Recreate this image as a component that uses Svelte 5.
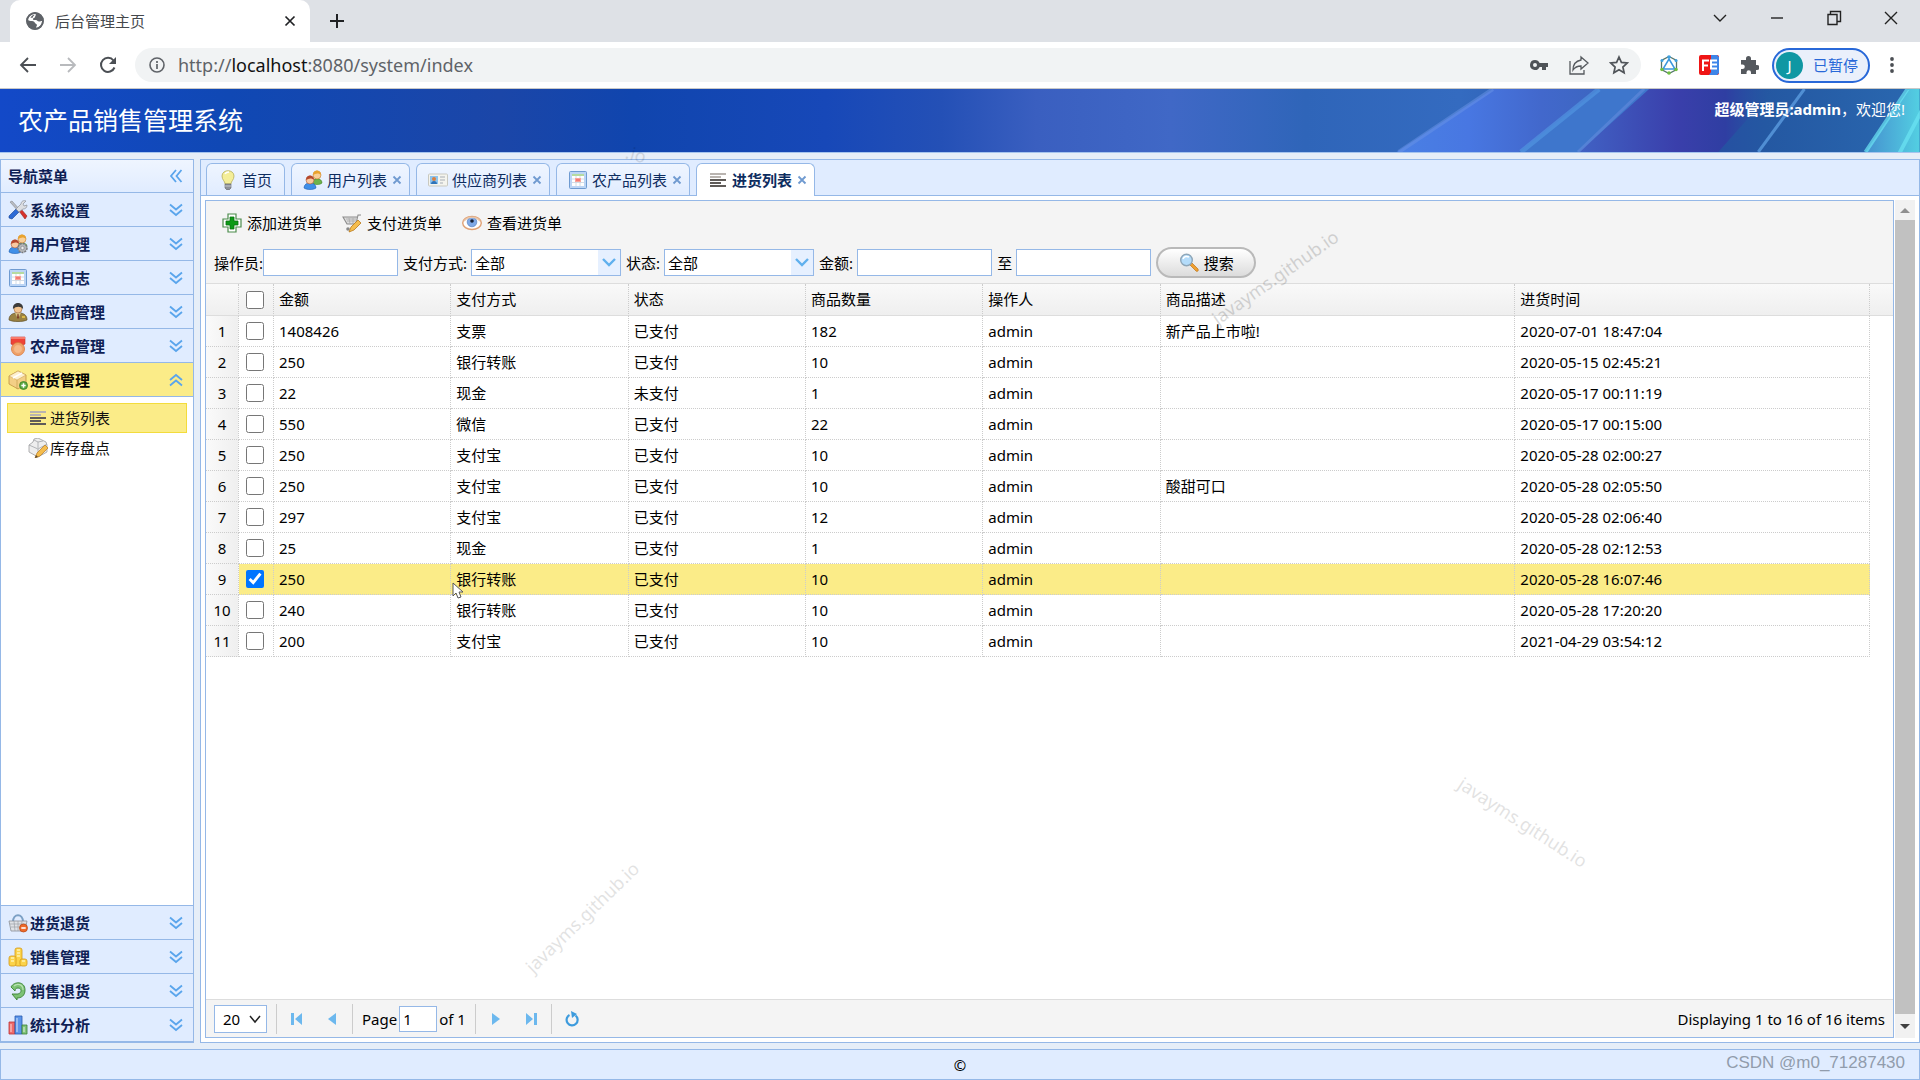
<script lang="ts">
	interface Menu {
		icon: string;
		title: string;
	}

	const top_menus: Array<Menu> = [
		{icon: 'tools', title: '系统设置'},
		{icon: 'users_gear', title: '用户管理'},
		{icon: 'calendar', title: '系统日志'},
		{icon: 'person', title: '供应商管理'},
		{icon: 'medal', title: '农产品管理'},
		{icon: 'box_add', title: '进货管理'},
	];

	const bottom_menus: Array<Menu> = [
		{icon: 'basket', title: '进货退货'},
		{icon: 'coins', title: '销售管理'},
		{icon: 'undo', title: '销售退货'},
		{icon: 'chart', title: '统计分析'},
	];

	const sub_menus: Array<Menu> = [
		{icon: 'lines', title: '进货列表'},
		{icon: 'box_edit', title: '库存盘点'},
	];

	const tabs: Array<Menu> = [
		{icon: 'bulb', title: '首页'},
		{icon: 'users', title: '用户列表'},
		{icon: 'card', title: '供应商列表'},
		{icon: 'calendar', title: '农产品列表'},
		{icon: 'lines', title: '进货列表'},
	];

	const actions: Array<Menu> = [
		{icon: 'add', title: '添加进货单'},
		{icon: 'cart', title: '支付进货单'},
		{icon: 'eye', title: '查看进货单'},
	];

	const columns = ['金额', '支付方式', '状态', '商品数量', '操作人', '商品描述', '进货时间'];

	const rows = [
		['1408426', '支票', '已支付', '182', 'admin', '新产品上市啦!', '2020-07-01 18:47:04'],
		['250', '银行转账', '已支付', '10', 'admin', '', '2020-05-15 02:45:21'],
		['22', '现金', '未支付', '1', 'admin', '', '2020-05-17 00:11:19'],
		['550', '微信', '已支付', '22', 'admin', '', '2020-05-17 00:15:00'],
		['250', '支付宝', '已支付', '10', 'admin', '', '2020-05-28 02:00:27'],
		['250', '支付宝', '已支付', '10', 'admin', '酸甜可口', '2020-05-28 02:05:50'],
		['297', '支付宝', '已支付', '12', 'admin', '', '2020-05-28 02:06:40'],
		['25', '现金', '已支付', '1', 'admin', '', '2020-05-28 02:12:53'],
		['250', '银行转账', '已支付', '10', 'admin', '', '2020-05-28 16:07:46'],
		['240', '银行转账', '已支付', '10', 'admin', '', '2020-05-28 17:20:20'],
		['200', '支付宝', '已支付', '10', 'admin', '', '2021-04-29 03:54:12'],
	];

	let open_menu = $state(5);
	let active_tab = $state(4);
	let checked = $state(rows.map((_, i) => i === 8));
</script>

{#snippet icon(name: string)}
	<svg class="icon" viewBox="0 0 20 20" aria-hidden="true">
		{#if name === 'tools'}
			<path d="M2 2l2-1 9 10-2 1z" fill="#b9bcc2" stroke="#85888f" stroke-width=".6" />
			<path d="M11 11l2-2 6 7-2 3z" fill="#d8322c" stroke="#962020" stroke-width=".6" />
			<path d="M8 9l3 3-7 7-3-1 0-2z" fill="#2d6bd6" stroke="#1a4391" stroke-width=".6" />
			<path d="M8 9l5-5c0-3 3-4 5-3l-3 3 1 2 3-1c0 3-2 4-4 4l-4 3z" fill="#dcdee2" stroke="#8d9098" stroke-width=".7" />
		{:else if name === 'users' || name === 'users_gear'}
			<path d="M9 13c0-5 10-6 10 0-2 2-8 2-10 0z" fill="#6db34c" stroke="#45852c" stroke-width=".6" />
			<circle cx="14" cy="5" r="4" fill="#f9cf98" stroke="#c47a27" stroke-width=".6" />
			<path d="M10 5c0-6 8-6 8 0-2-2-5-2-8 0z" fill="#e9a32e" />
			<path d="M1 18c0-7 12-7 12 0-3 2-9 2-12 0z" fill="#3f8fe8" stroke="#1f5eb0" stroke-width=".6" />
			<circle cx="7" cy="10" r="4" fill="#f9c9a0" stroke="#a5573a" stroke-width=".6" />
			<path d="M3 10c0-6 8-6 8 0-2-2-5-2-8 0z" fill="#b5482d" />
			{#if name === 'users_gear'}
				<circle cx="14.500" cy="14" r="4.500" fill="#b4b6b9" stroke="#77797d" stroke-width="1.500" stroke-dasharray="2 1" />
				<circle cx="14.500" cy="14" r="1.700" fill="#eee" stroke="#77797d" stroke-width=".6" />
			{/if}
		{:else if name === 'calendar'}
			<rect x="1.500" y="1.500" width="17" height="17" rx="1" fill="#bcd5f5" stroke="#6f9bd1" />
			<path d="M4 4h12v12H4z" fill="#fff" />
			<path d="M4 4h12v2H4z" fill="#b5dba0" />
			<path d="M4 9h12M4 12.500h12M8 6v10M12 6v10" stroke="#c9d3de" stroke-width=".8" />
			<path d="M7 8h6v4H7z" fill="#f9a49c" />
			<path d="M8 9h4v2H8z" fill="#f37c74" />
		{:else if name === 'person'}
			<path d="M1 18c0-4 2-6 6-7h6c4 1 6 3 6 7-4 2-14 2-18 0z" fill="#9a8243" stroke="#5f4d22" stroke-width=".7" />
			<path d="M7 11l3 6 3-6z" fill="#d8c287" />
			<path d="M9.500 12h1l.5 4-1 1-1-1z" fill="#7a3a22" />
			<circle cx="10" cy="7" r="4" fill="#f3c490" stroke="#a1693a" stroke-width=".6" />
			<path d="M5 7c-1-8 11-8 10 0-2-3-7-3-10 0z" fill="#3c3c3c" />
			<path d="M14 15h3" stroke="#f0cb45" stroke-width="1.500" />
		{:else if name === 'medal'}
			<path d="M3 1h14v7l-4 2H7L3 8z" fill="#ee4338" stroke="#c4332a" stroke-width=".6" />
			<path d="M3 1h14v2H3z" fill="#f87a6c" />
			<circle cx="10" cy="13" r="6.500" fill="#f0a268" stroke="#d9773b" stroke-width=".8" />
			<circle cx="10" cy="13" r="4.300" fill="#f6b988" stroke="#eaa06c" stroke-width=".6" />
		{:else if name === 'box_add'}
			<path d="M1 6l9-5 8 4v9l-8 5-9-5z" fill="#f3cf86" stroke="#b98a35" stroke-width=".7" />
			<path d="M1 6l8 4 9-5-8-4z" fill="#fdf0cf" stroke="#c79d4d" stroke-width=".5" />
			<path d="M9 10v9" stroke="#c79d4d" stroke-width=".7" />
			<path d="M5 8l9-5" stroke="#fff" stroke-width="1.500" />
			<circle cx="15.500" cy="15.500" r="4" fill="#5faa44" stroke="#2e7a1c" stroke-width=".7" />
			<path d="M13.300 15.500h4.400M15.500 13.300v4.400" stroke="#fff" stroke-width="1.500" />
		{:else if name === 'box_edit'}
			<path d="M1 7l4-3 1-3 4-1 4 2 4 2 1 3v7l-9 5-9-5z" fill="#eee" stroke="#8f9194" stroke-width=".7" />
			<path d="M1 7l9 4 9-5M10 11v8M6 2l4 2 5-1M10 4v6" fill="none" stroke="#a2a4a8" stroke-width=".8" />
			<path d="M17 7l3 3-8 8-5 2 2-5z" fill="#f5bd4d" stroke="#b97a1d" stroke-width=".7" />
			<path d="M7 20l1-3 2 2z" fill="#5a4a30" />
		{:else if name === 'lines'}
			<path d="M2 4h16M2 7h11" stroke="#b9b4b0" stroke-width="2" />
			<path d="M2 10h16M2 13h11M2 16h16" stroke="#5f5b58" stroke-width="2" />
		{:else if name === 'basket'}
			<path d="M5 9c0-9 10-9 10 0" fill="none" stroke="#7ba0c5" stroke-width="2" />
			<path d="M1 8h18l-2 10H3z" fill="#dfe2e6" stroke="#8c9197" stroke-width=".8" />
			<path d="M2 11h16M3 14h14M6 8l1 10M10 8v10M14 8l-1 10" stroke="#9da2a8" stroke-width=".7" />
			<circle cx="15.500" cy="15" r="4" fill="#ee6b2b" stroke="#b84612" stroke-width=".7" />
			<path d="M13.300 15h4.400" stroke="#fff" stroke-width="1.600" />
		{:else if name === 'coins'}
			<g fill="#fbd34a" stroke="#d49b18" stroke-width=".8">
				<rect x="7" y="1" width="7" height="18" rx="2" />
				<rect x="1" y="9" width="7" height="10" rx="2" />
				<rect x="12" y="12" width="7" height="7" rx="2" />
			</g>
			<path d="M9 3h3M9 6h3M9 9h3M3 11h3M3 14h3M14 14h3" stroke="#fff3b0" stroke-width="1.400" />
		{:else if name === 'undo'}
			<path d="M4 13h6c4-1 4-6 0-6-2 0-3 1-3 3l-4-4c3-6 14-6 14 3 0 6-4 8-8 8v2z" fill="#7cc274" stroke="#3b8236" stroke-width=".9" />
			<path d="M6 5c3-3 9-2 9 4" fill="none" stroke="#b8e2b2" stroke-width="1.200" />
		{:else if name === 'chart'}
			<path d="M1 7h6v12H1z" fill="#ee6a6a" stroke="#bc3434" stroke-width=".8" />
			<path d="M7 1h7v18H7z" fill="#5b95ea" stroke="#2758ad" stroke-width=".8" />
			<path d="M14 10h5v9h-5z" fill="#80c47b" stroke="#3b8236" stroke-width=".8" />
			<path d="M3 9v8M9 3v14M16 12v5" stroke="#fff" stroke-opacity=".5" stroke-width="1.500" />
		{:else if name === 'bulb'}
			<path d="M7 14c0-3-3-4-3-8 0-7 12-7 12 0 0 4-3 5-3 8z" fill="#f4ee98" stroke="#b5ae5c" stroke-width=".8" />
			<path d="M7 4c1-2 3-2 4-2" fill="none" stroke="#fff" stroke-width="1.500" />
			<path d="M7 14h6v4l-2 2H9l-2-2z" fill="#8d9198" stroke="#5f6268" stroke-width=".6" />
			<path d="M7 16h6" stroke="#d2d4d8" stroke-width=".8" />
		{:else if name === 'card'}
			<rect x=".5" y="4" width="19" height="12" rx="1" fill="#f4f4ee" stroke="#c9c9c0" />
			<path d="M2 6h8v8H2z" fill="#8dc4ee" />
			<circle cx="6" cy="9" r="2" fill="#d88040" />
			<path d="M3 14c0-4 6-4 6 0z" fill="#2f73b8" />
			<path d="M12 7h5M12 10h5M12 13h3" stroke="#a7adb5" stroke-width="1.200" />
		{:else if name === 'add'}
			<path d="M6 1h8v5h5v8h-5v5H6v-5H1V6h5z" fill="#fff" stroke="#4b8b4b" stroke-width="1.200" />
			<path d="M8 4h4v4h4v4h-4v4H8v-4H4V8h4z" fill="#0c9a16" stroke="#08720f" stroke-width=".8" />
		{:else if name === 'cart'}
			<path d="M19 2h-3l-2 9H5L1 4h14" fill="#ddd" stroke="#8c8c8c" stroke-width="1.100" />
			<path d="M4 6h10M5 8h9M7 5l1 6M11 5v6" stroke="#aaa" stroke-width=".8" />
			<circle cx="6" cy="16" r="1.800" fill="#888" />
			<path d="M16 7l3 3-7 7-5 2 2-5z" fill="#f5bd4d" stroke="#b97a1d" stroke-width=".8" />
		{:else if name === 'eye'}
			<ellipse cx="10" cy="10" rx="9.300" ry="6.500" fill="#fff" stroke="#dfa073" stroke-width="1.400" />
			<circle cx="10" cy="9" r="4.800" fill="#7fa9e6" stroke="#5781c0" stroke-width=".7" />
			<circle cx="10" cy="8" r="1.800" fill="#172238" />
			<path d="M2 8c4-5 12-5 16 0" fill="none" stroke="#e9c6aa" stroke-width="1.500" />
		{:else if name === 'search'}
			<path d="M11 12l2-2 6 6c1 2-1 3-2 2z" fill="#f0a030" stroke="#b97318" stroke-width=".7" />
			<circle cx="7.500" cy="7" r="5.800" fill="#b4dcfa" stroke="#8ea6b8" stroke-width="1.400" />
			<path d="M4 6c1-3 4-3 6-2" fill="none" stroke="#fff" stroke-width="1.500" />
		{/if}
	</svg>
{/snippet}

{#snippet menu_head(menu: Menu, selected: boolean, onclick: () => void)}
	<button class="menu_head" class:selected type="button" {onclick}>
		{@render icon(menu.icon)}
		<span>{menu.title}</span>
		<svg class="chevrons" class:up={selected} viewBox="0 0 14 14" aria-hidden="true">
			<path d="M1 1.500l6 5 6-5M1 7l6 5 6-5" />
		</svg>
	</button>
{/snippet}

<div class="page">
	<header class="chrome">
		<div class="tab_strip">
			<div class="chrome_tab">
				<svg class="s18" viewBox="0 0 18 18" aria-hidden="true">
					<circle cx="9" cy="9" r="8.700" fill="#5f6368" />
					<path d="M9.500 1.800c1 1.500-.5 2-.5 3.200s-2 .5-2 2 2 1 3 1 1.500 1.500 3 1.500 2-.5 3.200-.5c-.3 3.500-2.700 6-5.700 6.900-1-.9.500-1.900.5-2.900s-1.500-1-2-2-1-2-3-2-3.500-.5-4.200-1c.2-3.200 3.700-6.400 7.700-6.200z" fill="#fff" />
					<path d="M4.500 5.500c1-1.500 2.500-2.500 4-2.700-.5 1.200-1.500 1.200-1.500 2.200s-2 1-2.500.5z" fill="#5f6368" />
					<circle cx="9" cy="9" r="8" fill="none" stroke="#5f6368" stroke-width="1.800" />
				</svg>
				<span class="chrome_title">后台管理主页</span>
				<button class="plain" type="button" aria-label="关闭标签页">
					<svg class="s16" viewBox="0 0 16 16"><path d="M3.500 3.500l9 9M12.500 3.500l-9 9" stroke="#202124" stroke-width="1.700" /></svg>
				</button>
			</div>
			<button class="plain new_tab" type="button" aria-label="新标签页">
				<svg class="s16" viewBox="0 0 16 16"><path d="M8 1v14M1 8h14" stroke="#202124" stroke-width="2" /></svg>
			</button>
			<div class="window_controls">
				<button class="plain" type="button" aria-label="搜索标签页">
					<svg class="s16" viewBox="0 0 16 16"><path d="M2 5l6 6 6-6" fill="none" stroke="#222" stroke-width="1.400" /></svg>
				</button>
				<button class="plain" type="button" aria-label="最小化">
					<svg class="s16" viewBox="0 0 16 16"><path d="M2 8h12" stroke="#222" stroke-width="1.400" /></svg>
				</button>
				<button class="plain" type="button" aria-label="还原">
					<svg class="s16" viewBox="0 0 16 16"><path d="M2 4.500h9v10H2zM4.500 4.500v-3h10v10H11" fill="none" stroke="#222" stroke-width="1.400" /></svg>
				</button>
				<button class="plain" type="button" aria-label="关闭">
					<svg class="s16" viewBox="0 0 16 16"><path d="M2 2l12 12M14 2L2 14" stroke="#222" stroke-width="1.400" /></svg>
				</button>
			</div>
		</div>

		<div class="toolbar">
			<button class="plain" type="button" aria-label="后退">
				<svg class="s18" viewBox="0 0 18 18"><path d="M17 9H2M9 2L2 9l7 7" fill="none" stroke="#4b4f54" stroke-width="1.800" /></svg>
			</button>
			<button class="plain" type="button" aria-label="前进">
				<svg class="s18" viewBox="0 0 18 18"><path d="M1 9h15M9 2l7 7-7 7" fill="none" stroke="#b8babd" stroke-width="1.800" /></svg>
			</button>
			<button class="plain" type="button" aria-label="重新加载">
				<svg class="s18" viewBox="0 0 18 18"><path d="M15.500 11.500A7 7 0 1 1 14.500 4.500" fill="none" stroke="#4b4f54" stroke-width="2" /><path d="M17 1v7h-7z" fill="#4b4f54" /></svg>
			</button>
			<div class="address">
				<svg class="s16" viewBox="0 0 16 16" aria-hidden="true"><circle cx="8" cy="8" r="7" fill="none" stroke="#5f6368" stroke-width="1.600" /><path d="M8 7v5M8 4v2" stroke="#5f6368" stroke-width="1.700" /></svg>
				<span class="url">http://<b>localhost</b>:8080/system/index</span>
				<svg class="s20" viewBox="0 0 20 20" aria-hidden="true"><path d="M6 5a5 5 0 1 0 4.600 7H13v3h4v-3h2V8h-8.400A5 5 0 0 0 6 5zm0 3a2 2 0 1 1 0 4 2 2 0 0 1 0-4z" fill="#4f5358" fill-rule="evenodd" /></svg>
				<svg class="s20" viewBox="0 0 20 20" aria-hidden="true"><path d="M1 6v13h14v-4M12 2l7 6-7 6v-3c-4 0-6 1-8 4 0-6 3-9 8-10z" fill="none" stroke="#55595e" stroke-width="1.300" /></svg>
				<svg class="s20" viewBox="0 0 20 20" aria-hidden="true"><path d="M10 2l2.400 5.400 5.900.6-4.400 4 1.200 5.800-5.100-3-5.100 3 1.200-5.800-4.400-4 5.900-.6z" fill="none" stroke="#505459" stroke-width="1.700" /></svg>
			</div>
			<div class="extensions">
				<svg class="s20" viewBox="0 0 20 20" aria-hidden="true">
					<path d="M10 1.500l7.500 4v9L10 18.500l-7.500-4v-9z" fill="none" stroke="#55766c" stroke-width="1.300" />
					<path d="M10 4l6 10H4z" fill="#fff" stroke="#3b96dd" stroke-width="1.500" />
					<g fill="#3ea0e0"><circle cx="10" cy="2" r="1.800" /><circle cx="3" cy="5.500" r="1.500" /><circle cx="17" cy="5.500" r="1.500" /></g>
					<g fill="#70bf41"><circle cx="3" cy="14.500" r="1.800" /><circle cx="10" cy="18" r="1.800" /><circle cx="17" cy="14.500" r="1.800" /></g>
				</svg>
				<svg class="s20" viewBox="0 0 20 20" aria-hidden="true">
					<rect width="20" height="20" rx="2" fill="#ef1515" />
					<path d="M12 0h6l2 2v16l-2 2h-8l2-3z" fill="#3d85e8" />
					<path d="M4 16V5.500h6M4 10.500h5M18 5.500h-6v8h6M12 9.500h6" fill="none" stroke="#fff" stroke-width="2" />
				</svg>
				<svg class="s20" viewBox="0 0 20 20" aria-hidden="true"><path d="M2 5h5V3.500a2.500 2.500 0 0 1 5 0V5h5v5h1a2.500 2.500 0 0 1 0 5h-1v4h-5v-1.500a2 2 0 0 0-4.500 0V19H2v-5h1.500a2.300 2.300 0 0 0 0-4.600H2z" fill="#55595e" /></svg>
				<button class="profile" type="button"><span class="avatar">J</span><span>已暂停</span></button>
				<svg class="s20" viewBox="0 0 20 20" aria-hidden="true"><g fill="#4b4f54"><circle cx="10" cy="4" r="1.900" /><circle cx="10" cy="10" r="1.900" /><circle cx="10" cy="16" r="1.900" /></g></svg>
			</div>
		</div>
	</header>

	<div class="banner">
		<svg class="streaks" viewBox="0 0 920 63" preserveAspectRatio="none" aria-hidden="true">
			<defs>
				<linearGradient id="beam" x1="0" x2="1"><stop offset="0" stop-color="#4a80e4" /><stop offset=".35" stop-color="#4877e2" /><stop offset=".7" stop-color="#4268cc" /><stop offset="1" stop-color="#3c66c0" /></linearGradient>
				<linearGradient id="violet" x1="0" x2="1"><stop offset="0" stop-color="#4162c4" /><stop offset=".5" stop-color="#3a3fab" /><stop offset=".75" stop-color="#2f3ea2" /><stop offset="1" stop-color="#2556a2" stop-opacity="0" /></linearGradient>
				<linearGradient id="cyan" x1="0" x2="1"><stop offset="0" stop-color="#4590cf" /><stop offset="1" stop-color="#53cfe2" /></linearGradient>
			</defs>
			<path d="M494 0h110l-84 63H398z" fill="url(#beam)" />
			<path d="M600 0h55l-70 63h-65z" fill="#3e76cc" />
			<path d="M650 0h125l-56 63H580z" fill="url(#violet)" />
			<path d="M600 0l-78 63" stroke="#549ae4" stroke-width="5" opacity=".6" />
			<path d="M645 0l-66 63" stroke="#6a8fe0" stroke-width="3" opacity=".5" />
			<path d="M494 0l-94 63" stroke="#6a94e6" stroke-width="4" opacity=".5" />
			<path d="M805 0l-46 63" stroke="#5b9ce0" stroke-width="3" opacity=".8" />
			<path d="M909 0h11v63h-54z" fill="url(#cyan)" />
			<path d="M908 0l-42 63M922 22l-22 42" stroke="#6ce5f4" stroke-width="4" opacity=".7" />
		</svg>
		<h1>农产品销售管理系统</h1>
		<p><b>超级管理员:admin</b>，欢迎您!</p>
	</div>

	<div class="workspace">
		<nav class="sidebar">
			<div class="sidebar_title">
				<h2>导航菜单</h2>
				<svg class="chevrons left" viewBox="0 0 14 14" aria-hidden="true"><path d="M1 1.500l6 5 6-5M1 7l6 5 6-5" /></svg>
			</div>
			{#each top_menus as menu, i}
				{@render menu_head(menu, open_menu === i, () => (open_menu = i))}
			{/each}
			<ul class="sub_menu">
				{#each sub_menus as item, i}
					<li><a href="#{item.icon}" class:current={i === 0}>{@render icon(item.icon)}{item.title}</a></li>
				{/each}
			</ul>
			{#each bottom_menus as menu, i}
				{@render menu_head(menu, open_menu === i + 6, () => (open_menu = i + 6))}
			{/each}
		</nav>

		<main class="content">
			<div class="tabs" role="tablist">
				{#each tabs as tab, i}
					<button class="tab" class:active={active_tab === i} type="button" role="tab" aria-selected={active_tab === i} onclick={() => (active_tab = i)}>
						{@render icon(tab.icon)}
						<span>{tab.title}</span>
						{#if i > 0}
							<svg class="tab_close" viewBox="0 0 10 10" aria-hidden="true"><path d="M1.500 1.500l7 7M8.500 1.500l-7 7" stroke="#6f9ad0" stroke-width="1.800" /></svg>
						{/if}
					</button>
				{/each}
			</div>

			<div class="tab_body">
				<section class="panel">
					<div class="actions">
						{#each actions as action}
							<button class="action" type="button">{@render icon(action.icon)}{action.title}</button>
						{/each}
					</div>
					<form class="filters">
						<div class="field tight"><label for="operator">操作员:</label><input id="operator" type="text" /></div>
						<div class="field">
							<label for="pay_type">支付方式:</label>
							<span class="combo">
								<select id="pay_type"><option>全部</option></select>
								<svg viewBox="0 0 22 25" aria-hidden="true"><path d="M5 9l6 6 6-6" /></svg>
							</span>
						</div>
						<div class="field">
							<label for="status">状态:</label>
							<span class="combo">
								<select id="status"><option>全部</option></select>
								<svg viewBox="0 0 22 25" aria-hidden="true"><path d="M5 9l6 6 6-6" /></svg>
							</span>
						</div>
						<div class="field"><label for="amount_min">金额:</label><input id="amount_min" type="text" /></div>
						<div class="field"><label for="amount_max">至</label><input id="amount_max" type="text" /></div>
						<button class="search" type="button">{@render icon('search')}搜索</button>
					</form>

					<div class="grid_area">
						<table>
							<thead>
								<tr>
									<th></th>
									<th class="check"><input type="checkbox" aria-label="全选" /></th>
									{#each columns as column}
										<th>{column}</th>
									{/each}
								</tr>
							</thead>
							<tbody>
								{#each rows as row, i}
									<tr class:picked={checked[i]}>
										<td class="number">{i + 1}</td>
										<td class="check"><input type="checkbox" aria-label="选择第{i + 1}行" bind:checked={checked[i]} /></td>
										{#each row as cell}
											<td>{cell}</td>
										{/each}
									</tr>
								{/each}
							</tbody>
						</table>
					</div>

					<footer class="pager">
						<span class="page_size">
							<select aria-label="每页条数"><option>20</option></select>
							<svg viewBox="0 0 12 12" aria-hidden="true"><path d="M1 3l5 6 5-6" fill="none" stroke="#222" stroke-width="1.500" /></svg>
						</span>
						<i class="separator"></i>
						<button class="page_button" type="button" aria-label="第一页"><svg class="s16" viewBox="0 0 16 16"><path d="M2 2h3v12H2zM13 2v12L6 8z" /></svg></button>
						<button class="page_button" type="button" aria-label="上一页"><svg class="s16" viewBox="0 0 16 16"><path d="M12 2v12L4 8z" /></svg></button>
						<i class="separator"></i>
						<label class="page_number">Page <input type="text" value="1" /> of 1</label>
						<i class="separator"></i>
						<button class="page_button" type="button" aria-label="下一页"><svg class="s16" viewBox="0 0 16 16"><path d="M4 2v12l8-6z" /></svg></button>
						<button class="page_button" type="button" aria-label="最后一页"><svg class="s16" viewBox="0 0 16 16"><path d="M3 2v12l7-6zM11 2h3v12h-3z" /></svg></button>
						<i class="separator"></i>
						<button class="page_button" type="button" aria-label="刷新"><svg class="s16" viewBox="0 0 16 16"><path d="M11.500 4.500a5.500 5.500 0 1 1-6-.5" fill="none" stroke="#3d9bdd" stroke-width="2.200" /><path d="M7 0l6 3-5 4z" fill="#3d9bdd" /></svg></button>
						<span class="page_info">Displaying 1 to 16 of 16 items</span>
					</footer>
				</section>

				<div class="scrollbar" aria-hidden="true">
					<svg viewBox="0 0 20 20"><path d="M5 13l5-5 5 5z" fill="#8f8f8f" /></svg>
					<div class="thumb"></div>
					<svg viewBox="0 0 20 20"><path d="M5 8l5 5 5-5z" fill="#404040" /></svg>
				</div>
			</div>
		</main>
	</div>

	<footer class="copyright">©</footer>

	<div class="marks" aria-hidden="true">
		<span class="mark one">javayms.github.io</span>
		<span class="mark two">javayms.github.io</span>
		<span class="mark three">javayms.github.io</span>
		<span class="mark four">.io</span>
		<span class="csdn">CSDN @m0_71287430</span>
		<svg class="pointer" viewBox="0 0 12 18"><path d="M1 1v13l3-3 2 5 3-1-2-5h4z" fill="#fff" stroke="#555" /></svg>
	</div>
</div>

<style>
	:global(body) {
		background: #e6eef8;
	}

	.page {
		position: relative;
		display: flex;
		flex-direction: column;
		height: 100vh;
		overflow: hidden;
		font-family: 'Noto Sans', 'Noto Sans CJK SC', sans-serif;
		font-size: 15px;
		line-height: 20px;
		color: #000;
	}

	button,
	input,
	select {
		box-sizing: border-box;
		margin: 0;
		font: inherit;
		color: inherit;
	}

	svg {
		display: block;
		flex: none;
	}

	.icon,
	.s20 {
		width: 20px;
		height: 20px;
	}

	.s18 {
		width: 18px;
		height: 18px;
	}

	.s16 {
		width: 16px;
		height: 16px;
	}

	.plain {
		padding: 0;
		border: 0;
		background: none;
	}

	/* Browser window */
	.chrome {
		background: #dee1e6;
		border-bottom: 1px solid #c8c8c8;
	}

	.tab_strip {
		display: flex;
		align-items: center;
		height: 42px;
		padding-left: 10px;
	}

	.chrome_tab {
		display: flex;
		align-items: center;
		gap: 11px;
		box-sizing: border-box;
		width: 300px;
		height: 42px;
		padding: 0 12px 0 16px;
		border-radius: 10px 10px 0 0;
		background: #fff;
	}

	.chrome_title {
		flex: 1;
		color: #45484c;
	}

	.new_tab {
		margin-left: 19px;
	}

	.window_controls {
		display: flex;
		gap: 41px;
		margin-left: auto;
		padding: 0 21px 6px 0;
	}

	.toolbar {
		display: flex;
		align-items: center;
		gap: 22px;
		height: 46px;
		padding: 0 18px 0 19px;
		background: #fff;
	}

	.address {
		display: flex;
		flex: 1;
		align-items: center;
		gap: 20px;
		height: 34px;
		margin-left: -4px;
		padding: 0 12px 0 14px;
		border-radius: 17px;
		background: #f1f3f4;
	}

	.url {
		flex: 1;
		margin-left: -7px;
		font-size: 18px;
		color: #5f6368;
	}

	.url b {
		font-weight: 400;
		color: #111;
	}

	.extensions {
		display: flex;
		align-items: center;
		gap: 20px;
		margin-left: -4px;
	}

	.profile {
		display: flex;
		align-items: center;
		gap: 10px;
		width: 98px;
		height: 35px;
		margin: 0 -8px 0 -7px;
		padding: 0 0 0 2px;
		border: 2px solid #2868d8;
		border-radius: 18px;
		background: #eaf0fb;
		color: #2868d8;
		white-space: nowrap;
	}

	.avatar {
		width: 27px;
		height: 27px;
		border-radius: 50%;
		background: #0f97a3;
		line-height: 27px;
		color: #fff;
	}

	/* System banner */
	.banner {
		position: relative;
		display: flex;
		justify-content: space-between;
		height: 63px;
		border-bottom: 1px solid #a5c4ee;
		background: linear-gradient(90deg, #1349c8 0%, #1048b4 12%, #1b46a8 26%, #1045ae 33%, #1748b8 43%, #2450b6 49%, #3a5fc0 54%, #4068c6 61%, #2f65b9 68%, #346bc0 76%, #274ba2 88%, #2458a2 92%, #2a68b0 100%);
		color: #fff;
	}

	.streaks {
		position: absolute;
		right: 0;
		width: 48%;
		height: 100%;
	}

	.banner h1 {
		position: relative;
		margin: 0;
		padding-left: 18px;
		font-size: 25px;
		font-weight: 400;
		line-height: 62px;
	}

	.banner p {
		position: relative;
		margin: 0;
		padding: 10px 15px 0 0;
	}

	.workspace {
		display: flex;
		flex: 1;
		gap: 6px;
		min-height: 0;
		padding: 6px 0;
	}

	/* Accordion */
	.sidebar {
		display: flex;
		flex-direction: column;
		box-sizing: border-box;
		width: 194px;
		border: 1px solid #95b8e7;
		background: #fff;
	}

	.sidebar_title,
	.menu_head {
		display: flex;
		align-items: center;
		gap: 2px;
		box-sizing: border-box;
		height: 34px;
		padding: 0 10px 0 7px;
		border: 0;
		border-bottom: 1px solid #95b8e7;
		background: #e0ecff;
		color: #0e2054;
		font-weight: 700;
		text-align: left;
	}

	.sidebar_title {
		height: 33px;
		background: linear-gradient(#eff5ff, #e0ecff);
	}

	.sidebar_title h2 {
		flex: 1;
		margin: 0;
		font-size: 15px;
	}

	.menu_head span {
		flex: 1;
	}

	.menu_head.selected {
		background: #fbec88;
		color: #000;
	}

	.chevrons {
		width: 14px;
		height: 14px;
		fill: none;
		stroke: #5aa5ec;
		stroke-width: 1.8;
	}

	.chevrons.up {
		transform: rotate(180deg);
	}

	.chevrons.left {
		transform: rotate(90deg);
	}

	.sub_menu {
		flex: 1;
		margin: 0;
		padding: 6px 6px 0;
		border-bottom: 1px solid #95b8e7;
		list-style: none;
	}

	.sub_menu a {
		display: flex;
		align-items: center;
		gap: 2px;
		box-sizing: border-box;
		height: 30px;
		padding-left: 20px;
		border: 1px solid transparent;
		color: #111;
		text-decoration: none;
	}

	.sub_menu a.current {
		border-color: #f3dc3c;
		background: #fbec88;
	}

	/* Content tabs */
	.content {
		display: flex;
		flex: 1;
		flex-direction: column;
		min-width: 0;
		border: 1px solid #95b8e7;
		background: #fff;
	}

	.tabs {
		display: flex;
		gap: 6px;
		height: 32px;
		padding: 3px 5px 0;
		border-bottom: 1px solid #95b8e7;
		background: #e0ecff;
	}

	.tab {
		display: flex;
		align-items: center;
		gap: 4px;
		height: 32px;
		padding: 0 7px 0 11px;
		border: 1px solid #95b8e7;
		border-bottom: 0;
		border-radius: 6px 6px 0 0;
		background: linear-gradient(#eff5ff, #e0ecff);
		color: #0e2d5f;
	}

	.tab:first-child {
		padding-right: 12px;
	}

	.tab.active {
		height: 33px;
		background: #fff;
		font-weight: 700;
	}

	.tab_close {
		width: 10px;
		height: 10px;
		margin-left: 1px;
	}

	.tab_body {
		display: flex;
		flex: 1;
		gap: 1px;
		min-height: 0;
		padding: 4px;
	}

	.panel {
		display: flex;
		flex: 1;
		flex-direction: column;
		min-width: 0;
		border: 1px solid #95b8e7;
	}

	.actions {
		display: flex;
		gap: 20px;
		padding: 12px 16px 9px;
		background: #f4f4f4;
	}

	.action {
		display: flex;
		align-items: center;
		gap: 5px;
		padding: 0;
		border: 0;
		background: none;
	}

	.filters {
		display: flex;
		align-items: center;
		gap: 5px;
		height: 41px;
		padding: 0 8px;
		border-bottom: 1px solid #ddd;
		background: #f4f4f4;
	}

	.field {
		display: flex;
		align-items: center;
		gap: 4px;
	}

	.field.tight {
		gap: 0;
	}

	.filters input,
	.filters select {
		height: 27px;
		padding: 0 3px;
		border: 1px solid #95b8e7;
		border-radius: 0;
		background: #fff;
	}

	.filters input {
		width: 135px;
	}

	.filters select {
		width: 150px;
		appearance: none;
	}

	.combo {
		position: relative;
	}

	.combo svg {
		position: absolute;
		top: 1px;
		right: 1px;
		width: 22px;
		height: 25px;
		background: #e6f0ff;
		fill: none;
		stroke: #5fb0ee;
		stroke-width: 2.4;
		pointer-events: none;
	}

	.search {
		display: flex;
		align-items: center;
		justify-content: center;
		gap: 5px;
		width: 100px;
		height: 31px;
		padding: 0;
		border: 2px solid #b9b9b9;
		border-radius: 16px;
		background: linear-gradient(#fff, #dcdcdc);
	}

	/* Data grid */
	.grid_area {
		flex: 1;
		min-height: 0;
		background: linear-gradient(#f9f9f9, #efefef 31px, #ddd 31px, #ddd 32px, #fff 32px);
	}

	table {
		display: block;
		margin-right: 23px;
	}

	thead,
	tbody {
		display: block;
	}

	tr {
		display: grid;
		grid-template-columns: 33px 35px repeat(5, 1fr) 2fr 2fr;
	}

	th,
	td {
		box-sizing: border-box;
		height: 31px;
		padding: 0 5px;
		border-right: 1px dotted #ccc;
		border-bottom: 1px dotted #ccc;
		font-weight: 400;
		line-height: 30px;
		text-align: left;
	}

	th {
		height: 32px;
		border-bottom-color: transparent;
	}

	.number {
		padding: 0;
		background: linear-gradient(90deg, #fafafa, #efefef);
		text-align: center;
	}

	.check {
		display: flex;
		align-items: center;
		padding: 0 7px;
	}

	.check input {
		width: 18px;
		height: 18px;
	}

	.picked td:not(.number) {
		background: #fbec88;
	}

	/* Pager */
	.pager {
		display: flex;
		align-items: center;
		height: 37px;
		padding: 0 8px;
		border-top: 1px solid #ddd;
		background: #f4f4f4;
	}

	.page_size {
		position: relative;
		margin-right: 2px;
	}

	.page_size select {
		display: block;
		width: 53px;
		height: 28px;
		padding: 0 8px;
		border: 1px solid #95b8e7;
		background: #fff;
		appearance: none;
	}

	.page_size svg {
		position: absolute;
		top: 8px;
		right: 6px;
		width: 12px;
		height: 12px;
		pointer-events: none;
	}

	.separator {
		width: 1px;
		height: 30px;
		margin: 0 7px;
		background: #ccc;
	}

	.page_button {
		width: 26px;
		padding: 0 5px;
		border: 0;
		background: none;
	}

	.page_button + .page_button {
		margin-left: 9px;
	}

	.page_button svg {
		fill: #6cb8ee;
	}

	.page_number {
		display: flex;
		align-items: center;
		gap: 2px;
		margin: 0 2px;
	}

	.page_number input {
		width: 38px;
		height: 26px;
		padding: 0 3px;
		border: 1px solid #95b8e7;
		background: #fff;
	}

	.page_info {
		margin-left: auto;
	}

	.scrollbar {
		display: flex;
		flex-direction: column;
		width: 20px;
		background: #f1f1f1;
	}

	.scrollbar .thumb {
		flex: 1;
		background: #c1c1c1;
	}

	.scrollbar svg {
		width: 20px;
		height: 20px;
	}

	.scrollbar svg:last-child {
		height: 24px;
	}

	.copyright {
		height: 29px;
		border: 1px solid #95b8e7;
		background: #e0ecff;
		line-height: 30px;
		text-align: center;
	}

	/* Overlays */
	.marks {
		position: absolute;
		inset: 0;
		pointer-events: none;
	}

	.mark {
		position: absolute;
		font-size: 18px;
		color: #000;
		opacity: 0.11;
		translate: -50% -50%;
	}

	.one {
		top: 277px;
		left: 1275px;
		opacity: 0.15;
		rotate: -35deg;
	}

	.two {
		top: 917px;
		left: 582px;
		rotate: -44deg;
	}

	.three {
		top: 822px;
		left: 1523px;
		rotate: 33deg;
	}

	.four {
		top: 154px;
		left: 636px;
		rotate: 16deg;
	}

	.csdn {
		position: absolute;
		right: 15px;
		bottom: 7px;
		font-family: 'Liberation Sans', sans-serif;
		font-size: 17px;
		color: #919cac;
	}

	.pointer {
		position: absolute;
		top: 582px;
		left: 452px;
		width: 12px;
		height: 18px;
	}
</style>
